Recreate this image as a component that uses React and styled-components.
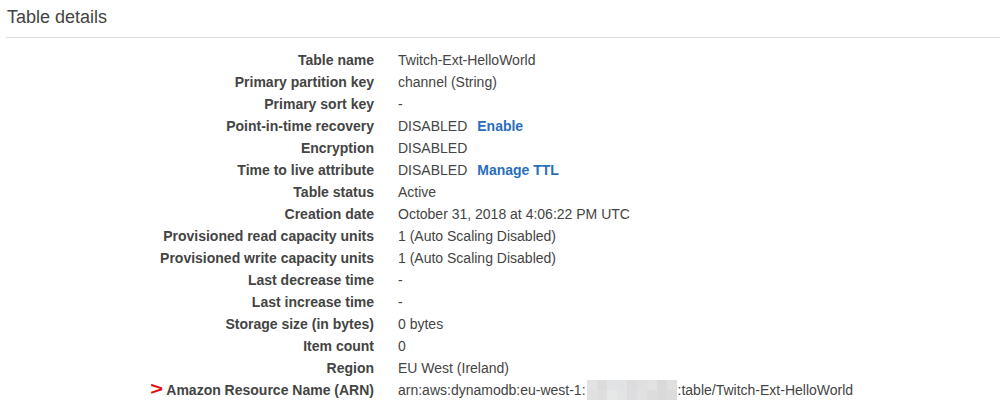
import styled, { createGlobalStyle } from 'styled-components';

const GlobalStyle = createGlobalStyle`
  body {
    margin: 0;
    background: #fff;
    font-family: "Liberation Sans", Arial, sans-serif;
    color: #444;
  }
`;

const rows = [
  { label: 'Table name', value: 'Twitch-Ext-HelloWorld' },
  { label: 'Primary partition key', value: 'channel (String)' },
  { label: 'Primary sort key', value: '-' },
  { label: 'Point-in-time recovery', value: 'DISABLED', link: 'Enable' },
  { label: 'Encryption', value: 'DISABLED' },
  { label: 'Time to live attribute', value: 'DISABLED', link: 'Manage TTL' },
  { label: 'Table status', value: 'Active' },
  { label: 'Creation date', value: 'October 31, 2018 at 4:06:22 PM UTC' },
  { label: 'Provisioned read capacity units', value: '1 (Auto Scaling Disabled)' },
  { label: 'Provisioned write capacity units', value: '1 (Auto Scaling Disabled)' },
  { label: 'Last decrease time', value: '-' },
  { label: 'Last increase time', value: '-' },
  { label: 'Storage size (in bytes)', value: '0 bytes' },
  { label: 'Item count', value: '0' },
  { label: 'Region', value: 'EU West (Ireland)' },
];

const blurCells = [
  ['#e3e3e3', '#dcdcdc', '#e2e3e5', '#e1e2e4', '#dcdcde', '#dfdfe0', '#e2e2e2', '#d9dadb', '#e0e0e0'],
  ['#e0e0e0', '#dededf', '#e6e7e7', '#e3e3e3', '#dddddf', '#e1e1e1', '#dcdcdc', '#dadada', '#dcdcdd'],
];

function App() {
  return (
    <>
      <GlobalStyle />
      <Panel>
        <Title>Table details</Title>
        <Divider />
        <Details>
          {rows.map((row) => (
            <Row key={row.label}>
              <Label>{row.label}</Label>
              <Value>
                {row.value}
                {row.link && <Link href="#">{row.link}</Link>}
              </Value>
            </Row>
          ))}
          <Row>
            <Label>
              <Marker>&gt;</Marker>
              Amazon Resource Name (ARN)
            </Label>
            <Value>
              arn:aws:dynamodb:eu-west-1:
              <Redacted>
                {blurCells.flat().map((c, i) => (
                  <Cell key={i} $color={c} />
                ))}
              </Redacted>
              :table/Twitch-Ext-HelloWorld
            </Value>
          </Row>
        </Details>
      </Panel>
    </>
  );
}

export default App;

const Panel = styled.div`
  padding: 5px 0 0 6px;
`;

const Title = styled.h2`
  margin: 0 0 0 1px;
  font-size: 18px;
  font-weight: normal;
  color: #444;
  line-height: 24px;
`;

const Divider = styled.div`
  height: 1px;
  background: #dddddd;
  margin-top: 8px;
`;

const Details = styled.div`
  display: flex;
  flex-direction: column;
  padding-top: 11px;
`;

const Row = styled.div`
  display: grid;
  grid-template-columns: 368px 1fr;
  column-gap: 24px;
  height: 22px;
  align-items: center;
  font-size: 14px;
`;

const Label = styled.div`
  text-align: right;
  font-weight: bold;
  color: #444;
`;

const Marker = styled.span`
  display: inline-block;
  color: #e01010;
  font-weight: bold;
  font-size: 19px;
  line-height: 14px;
  transform: scaleX(1.15);
  margin-right: 4px;
`;

const Value = styled.div`
  display: flex;
  align-items: center;
  white-space: nowrap;
  color: #444;
`;

const Link = styled.a`
  margin-left: 10px;
  font-weight: bold;
  color: #2a6ebb;
  text-decoration: none;
`;

const Redacted = styled.span`
  display: inline-grid;
  grid-template-columns: repeat(9, 10px);
  grid-auto-rows: 10px;
  margin: 0 1px;
`;

const Cell = styled.span`
  background: ${(p) => p.$color};
`;
